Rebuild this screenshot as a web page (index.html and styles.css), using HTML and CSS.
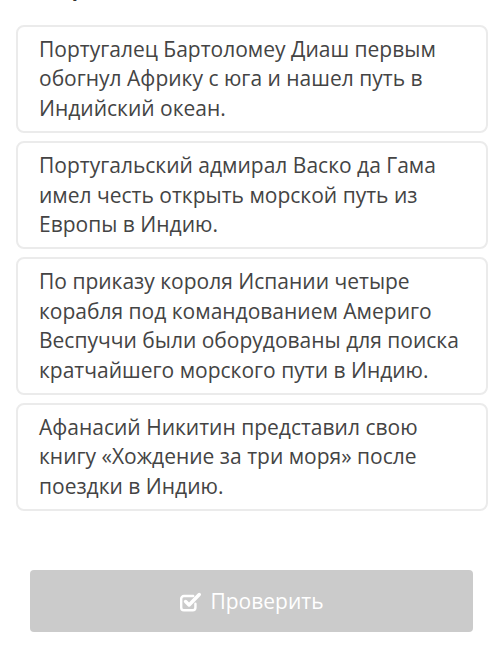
FILE: index.html
```html
<!DOCTYPE html>
<html>
<head>
	<meta charset="UTF-8">
	<title>Тест</title>
	<link rel="stylesheet" href="styles.css">
</head>
<body>
	<div class="pregunta">
		<h3 class="titulo">Выберите один или несколько ответов</h3>

		<div class="opciones">
			<div class="opcion">Португалец Бартоломеу Диаш первым обогнул Африку с юга и нашел путь в Индийский океан.</div>
			<div class="opcion">Португальский адмирал Васко да Гама имел честь открыть морской путь из Европы в Индию.</div>
			<div class="opcion">По приказу короля Испании четыре корабля под командованием Америго Веспуччи были оборудованы для поиска кратчайшего морского пути в Индию.</div>
			<div class="opcion">Афанасий Никитин представил свою книгу «Хождение за три моря» после поездки в Индию.</div>
		</div>

		<button type="button" class="botonProbar" disabled>
			<svg class="icono" width="23" height="21" viewBox="0 0 21 19">
				<path d="M15 11.5v3.5a2.5 2.5 0 0 1-2.5 2.5h-8A2.5 2.5 0 0 1 2 15V7a2.5 2.5 0 0 1 2.5-2.5h8.5" fill="none" stroke="#fff" stroke-width="2.2" stroke-linecap="round"/>
				<path d="M6 9.5l3.2 3.2L18.5 3.2" fill="none" stroke="#fff" stroke-width="3.2" stroke-linecap="round" stroke-linejoin="round"/>
			</svg>
			Проверить
		</button>
	</div>
</body>
</html>
```

FILE: styles.css
```css
body{
	margin: 0;
	background: #fff;
	font-family: "Open Sans", "Noto Sans", sans-serif;
	color: #444;
}

.pregunta{
	padding: 0 12px 0 16px;
}

.titulo{
	margin: -26px 0 22px 1px;
	font-size: 20px;
	line-height: 29px;
	font-weight: 700;
	color: #333;
}

.opciones{
	display: flex;
	flex-direction: column;
	gap: 8px;
}

.opcion{
	border: 2px solid #ebebeb;
	border-radius: 8px;
	padding: 8px 18px 8px 21px;
	font-size: 21px;
	line-height: 1.4;
	background: #fff;
}

.botonProbar{
	display: flex;
	align-items: center;
	justify-content: center;
	gap: 8px;
	width: 443px;
	height: 62px;
	margin: 59px 0 0 14px;
	border: none;
	border-radius: 4px;
	background: #cbcbcb;
	color: #fff;
	font-family: "Open Sans", "Noto Sans", sans-serif;
	font-size: 21px;
}

.icono{
	display: block;
	flex-shrink: 0;
}
```
